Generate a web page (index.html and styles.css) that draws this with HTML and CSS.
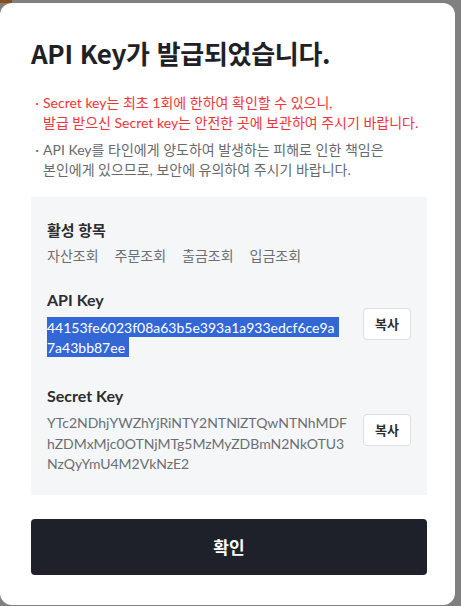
FILE: index.html
```html
<!DOCTYPE html>
<html lang="ko">
<head>
<meta charset="utf-8">
<link rel="stylesheet" href="styles.css">
</head>
<body>
<div class="backdrop-mark"></div>
<div class="modal">
  <h1 class="title">API Key가 발급되었습니다.</h1>
  <ul class="notes">
    <li class="note note-red"><span class="dot">·</span><span>Secret key는 최초 1회에 한하여 확인할 수 있으니,<br>발급 받으신 Secret key는 안전한 곳에 보관하여 주시기 바랍니다.</span></li>
    <li class="note note-gray"><span class="dot">·</span><span>API Key를 타인에게 양도하여 발생하는 피해로 인한 책임은<br>본인에게 있으므로, 보안에 유의하여 주시기 바랍니다.</span></li>
  </ul>
  <div class="panel">
    <div class="perm-title">활성 항목</div>
    <div class="perms">
      <span>자산조회</span><span>주문조회</span><span>출금조회</span><span>입금조회</span>
    </div>
    <div class="key-row key-row-first">
      <div class="key-col">
        <div class="key-label">API Key</div>
        <div class="key-value"><span class="selected">44153fe6023f08a63b5e393a1a933edcf6ce9a<br>7a43bb87ee</span></div>
      </div>
      <button class="copy">복사</button>
    </div>
    <div class="key-row">
      <div class="key-col">
        <div class="key-label">Secret Key</div>
        <div class="key-value">YTc2NDhjYWZhYjRiNTY2NTNlZTQwNTNhMDF<br>hZDMxMjc0OTNjMTg5MzMyZDBmN2NkOTU3<br>NzQyYmU4M2VkNzE2</div>
      </div>
      <button class="copy">복사</button>
    </div>
  </div>
  <button class="confirm">확인</button>
</div>
</body>
</html>
```
FILE: styles.css
```css
* { box-sizing: border-box; }
html, body { margin: 0; padding: 0; }
body {
  background: #808080;
  font-family: "Lato", "Noto Sans CJK KR", sans-serif;
  overflow: hidden;
  height: 606px;
}
.backdrop-mark {
  width: 12px;
  height: 3px;
  background: #8a4d1c;
}
.modal {
  width: 455px;
  background: #fff;
  border-radius: 12px;
  padding: 32px 28px 30px 31px;
}
.title {
  margin: 0;
  font-family: "Noto Sans CJK KR", sans-serif;
  font-size: 26px;
  line-height: 36px;
  font-weight: 700;
  color: #1f2126;
  letter-spacing: -0.3px;
}
.notes {
  list-style: none;
  margin: 22px 0 0;
  padding: 0;
}
.note {
  display: flex;
  font-size: 14px;
  line-height: 20px;
}
.note + .note { margin-top: 7px; }
.note-red { color: #f2333a; }
.note-gray { color: #666a70; }
.dot {
  width: 12px;
  flex: none;
  text-align: center;
}
.panel {
  margin-top: 17px;
  background: #f5f6f8;
  padding: 22px 16px 20px 16px;
}
.perm-title {
  font-size: 15px;
  line-height: 22px;
  font-weight: 700;
  color: #2b2d31;
}
.perms {
  display: flex;
  gap: 16px;
  margin-top: 5px;
  font-size: 14px;
  line-height: 20px;
  color: #6b6e73;
}
.key-row {
  display: flex;
  align-items: center;
  gap: 14px;
  margin-top: 27px;
}
.key-row-first { margin-top: 23px; }
.key-col {
  flex: 1;
  min-width: 0;
}
.key-label {
  font-size: 16px;
  line-height: 22px;
  font-weight: 700;
  color: #2b2d31;
}
.key-value {
  margin-top: 6px;
  font-size: 14px;
  line-height: 20.5px;
  color: #6b6e73;
  white-space: nowrap;
}
.selected {
  background: #3367d6;
  color: #fff;
  padding: 1.5px 4px 1.5px 0;
  -webkit-box-decoration-break: clone;
  box-decoration-break: clone;
}
.copy {
  flex: none;
  width: 48px;
  height: 32px;
  background: #fff;
  border: 1px solid #dcdfe3;
  border-radius: 4px;
  font-family: "Noto Sans CJK KR", sans-serif;
  font-size: 13px;
  font-weight: 700;
  color: #2b2d31;
  padding: 0;
}
.confirm {
  display: block;
  width: 396px;
  height: 56px;
  margin-top: 24px;
  border: none;
  border-radius: 4px;
  background: #1e2129;
  color: #fff;
  font-family: "Noto Sans CJK KR", sans-serif;
  font-size: 17px;
  font-weight: 700;
}
```
